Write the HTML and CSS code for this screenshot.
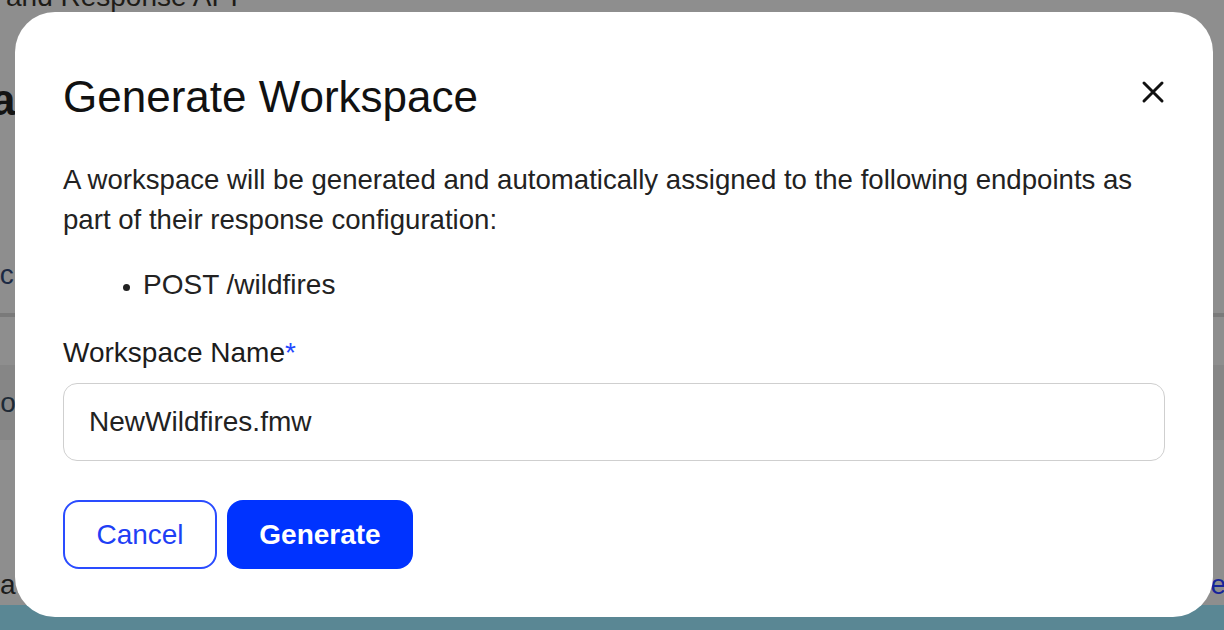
FILE: index.html
```html
<!DOCTYPE html>
<html lang="en">

<head>
    <meta charset="UTF-8" />
    <meta name="viewport" content="width=device-width, initial-scale=1.0" />
    <title>Generate Workspace</title>
    <link rel="stylesheet" href="styles.css">
</head>

<body>
    <!-- page behind the dialog, dimmed -->
    <div class="page">
        <div class="crumb">and Response API</div>
        <div class="page-heading">a</div>
        <div class="page-sub">Sc</div>
        <div class="page-divider"></div>
        <div class="page-band"><span class="band-text">Co</span></div>
        <div class="page-footer-row">
            <span class="footer-left">a</span>
            <span class="footer-link">.e</span>
        </div>
        <div class="page-bottom"></div>
    </div>

    <div class="modal">
        <div class="modal-header">
            <h2 class="modal-title">Generate Workspace</h2>
            <button class="close-btn" aria-label="Close">
                <svg width="24" height="24" viewBox="0 0 24 24">
                    <path d="M3 3 L21 21 M21 3 L3 21" stroke="#111" stroke-width="3" stroke-linecap="round" fill="none" />
                </svg>
            </button>
        </div>

        <p class="modal-text">A workspace will be generated and automatically assigned to the following endpoints as
            part of their response configuration:</p>

        <ul class="endpoint-list">
            <li>POST /wildfires</li>
        </ul>

        <label class="field-label">Workspace Name<span class="required">*</span></label>
        <div class="text-input">NewWildfires.fmw</div>

        <div class="actions">
            <button class="btn btn-outline">Cancel</button>
            <button class="btn btn-primary">Generate</button>
        </div>
    </div>
</body>

</html>
```

FILE: styles.css
```css
body {
    margin: 0;
    background-color: #8e8e8e;
    font-family: "Liberation Sans", Arial, sans-serif;
    overflow: hidden;
}

/* dimmed page */

.page {
    display: flex;
    flex-direction: column;
    height: 630px;
}

.crumb {
    margin-top: -17px;
    height: 28px;
    line-height: 28px;
    font-size: 28px;
    color: #1e1c18;
    padding-left: 6px;
}

.page-heading {
    margin-top: 59px;
    height: 60px;
    line-height: 60px;
    font-size: 44px;
    font-weight: bold;
    color: #141414;
    text-indent: -9px;
}

.page-sub {
    margin-top: 125px;
    height: 40px;
    line-height: 40px;
    font-size: 28px;
    color: #1c2a44;
    text-indent: -19px;
}

.page-divider {
    margin-top: 18px;
    height: 4px;
    background: #7a7a7a;
}

.page-band {
    margin-top: 48px;
    height: 75px;
    line-height: 75px;
    background: #868686;
    font-size: 28px;
    color: #1e2a36;
}

.band-text {
    margin-left: -20px;
}

.page-footer-row {
    margin-top: 125px;
    height: 40px;
    line-height: 40px;
    font-size: 28px;
    display: flex;
    justify-content: space-between;
}

.footer-left {
    color: #1c1c1c;
}

.footer-link {
    color: #16249a;
    margin-right: -2px;
}

.page-bottom {
    flex: 1;
    background: #5a8794;
}

/* dialog */

.modal {
    position: fixed;
    top: 12px;
    left: 15px;
    width: 1198px;
    height: 605px;
    box-sizing: border-box;
    padding: 57px 48px 48px;
    background: white;
    border-radius: 40px;
}

.modal-header {
    display: flex;
    justify-content: space-between;
    align-items: flex-start;
    height: 56px;
}

.modal-title {
    margin: 0;
    font-size: 44px;
    line-height: 56px;
    font-weight: normal;
    color: #111;
}

.close-btn {
    margin-top: 11px;
    padding: 0;
    border: none;
    background: none;
    width: 24px;
    height: 24px;
}

.modal-text {
    margin: 35px 0 0;
    font-size: 27.6px;
    line-height: 40px;
    color: #222;
}

.endpoint-list {
    margin: 25px 0 0;
    padding-left: 80px;
    font-size: 28px;
    line-height: 40px;
    color: #222;
}

.endpoint-list li::marker {
    font-size: 22px;
}

.field-label {
    display: block;
    margin-top: 28px;
    font-size: 28px;
    line-height: 40px;
    color: #1c1c1c;
}

.required {
    color: #2347ff;
}

.text-input {
    margin-top: 10px;
    height: 78px;
    box-sizing: border-box;
    border: 1.5px solid #cfcfcf;
    border-radius: 14px;
    padding: 0 25px;
    display: flex;
    align-items: center;
    font-size: 28px;
    color: #222;
}

.actions {
    display: flex;
    gap: 10px;
    margin-top: 39px;
}

.btn {
    height: 69px;
    border-radius: 16px;
    font-family: "Liberation Sans", Arial, sans-serif;
    font-size: 28px;
    padding: 0;
}

.btn-outline {
    width: 154px;
    background: white;
    border: 2px solid #2a4cff;
    color: #1f3ff5;
}

.btn-primary {
    width: 186px;
    background: #0033ff;
    border: none;
    color: white;
    font-weight: bold;
}
```
